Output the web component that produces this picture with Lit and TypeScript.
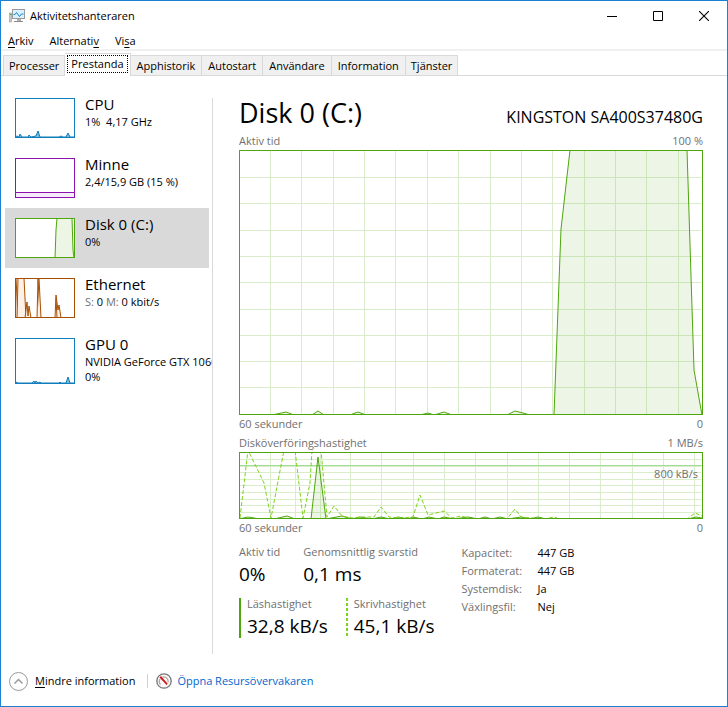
import { LitElement, html, svg, css } from "lit";
import { customElement, property, state } from "lit/decorators.js";
import { classMap } from "lit/directives/class-map.js";

type Resource = {
  id: string;
  name: string;
  lines: unknown[];
  color: string;
  fill: string;
  height: number;
  shapes: string[];
};

const RESOURCES: Resource[] = [
  {
    id: "cpu",
    name: "CPU",
    lines: ["1%  4,17 GHz"],
    color: "#117dbb",
    fill: "#7fb9d9",
    height: 40,
    shapes: ["0,39 2,38 4,39 5,36 7,39 13,39 14,37 16,39 21,38 23,33 25,39 44,39 46,38 48,39 51,39 53,35 55,39 59,39"],
  },
  {
    id: "minne",
    name: "Minne",
    lines: ["2,4/15,9 GB (15 %)"],
    color: "#8b12ae",
    fill: "#f6ecf9",
    height: 40,
    shapes: ["0,34.5 60,34.5"],
  },
  {
    id: "disk",
    name: "Disk 0 (C:)",
    lines: ["0%"],
    color: "#4da60c",
    fill: "#edf5e5",
    height: 40,
    shapes: ["40,40 41,12 42,0 57,0 58,32 59,40"],
  },
  {
    id: "ethernet",
    name: "Ethernet",
    lines: [html`<span class="dim">S:</span> 0 <span class="dim">M:</span> 0 kbit/s`],
    color: "#a74f01",
    fill: "#fdf1e7",
    height: 40,
    shapes: [
      "1,0 3,40",
      "2,40 3,0 9,0 11,40",
      "10,40 12,24 13,38 14,28 16,40",
      "22,40 23,0 25,40",
      "24,0 26,40",
      "40,40 41,17 43,32 44,27 46,40",
      "41,20 42,40",
    ],
  },
  {
    id: "gpu",
    name: "GPU 0",
    lines: ["NVIDIA GeForce GTX 1060 6GB", "0%"],
    color: "#117dbb",
    fill: "#7fb9d9",
    height: 46,
    shapes: ["0,45 1,44 3,45 17,45 19,43 20,45 21,43 23,45 25,44 26,45 44,45 45,44 46,45 51,45 53,39 55,45 59,45"],
  },
];

const TABS = ["Processer", "Prestanda", "Apphistorik", "Autostart", "Användare", "Information", "Tjänster"];

const range = (n: number, from: number, step: number) => Array.from({ length: n }, (_, i) => Math.round(from + i * step));

@customElement("disk-chart")
class DiskChart extends LitElement {
  static styles = css`
    :host { display: block; }
    svg { display: block; width: 100%; overflow: hidden; box-sizing: border-box; border: 1px solid #4da60c; }
    .tall { height: 265px; }
    .short { height: 67px; }
    .grid { stroke: #d9edcb; stroke-width: 1; shape-rendering: crispEdges; }
    .mark { stroke: #a2dc95; stroke-width: 1; shape-rendering: crispEdges; }
    .line { fill: rgba(77, 166, 12, 0.1); stroke: #4da60c; stroke-width: 1; vector-effect: non-scaling-stroke; }
    .write { fill: none; stroke: #7cd31c; stroke-width: 1; stroke-dasharray: 4 2; vector-effect: non-scaling-stroke; }
  `;
  @property() kind = "tall";

  render() {
    const tall = this.kind === "tall";
    const h = tall ? 263 : 65;
    const xs = tall ? range(14, 30, 31.36) : [30, 55, 80, ...range(12, 110, 31.3)];
    const ys = tall ? range(9, 26, 26.3) : range(9, 6, 6.6);
    return html`<svg class=${this.kind} viewBox="0 0 462 ${h}" preserveAspectRatio="none" aria-hidden="true">
      ${xs.map((x) => svg`<line class="grid" x1=${x + 0.5} x2=${x + 0.5} y1="0" y2=${h} />`)}
      ${ys.map((y) => svg`<line class="grid" x1="0" x2="461" y1=${y + 0.5} y2=${y + 0.5} />`)}
      ${tall
        ? svg`
          <polyline class="line" points="-1,264 32,264 46,261 54,264 72,264 78,260 84,264 110,264 118,261 126,264 180,264 188,262 194,264 204,261 212,264 267,264 275,260 283,262 290,264 314,264 321,78 330,-1 447,-1 454,219 462,264" />`
        : svg`
          <line class="mark" x1="0" x2="462" y1="12.5" y2="12.5" />
          <polyline class="line" points="-1,66 8,64 20,66 34,66 47,63 55,66 71,66 78,4 86,66 102,63 112,66 120,64 132,66 141,64 150,66 158,64 168,66 173,64 182,66 189,64 198,66 204,64 214,66 228,64 238,66 245,64 252,66 260,64 268,66 281,64 290,66 298,64 306,66 330,67 444,67 456,64 462,65" />
          <polyline class="write" points="0,65 8,-3 24,30 31,65 44,-3 55,-3 63,65 70,30 72,-3 81,-3 87,64 94,53 102,63 112,65 120,64 134,64 141,54 149,64 160,65 173,64 180,42 188,62 204,58 212,65 221,63 232,66 267,66 275,56 281,64 305,66 314,64 322,67 446,67 455,60 462,63" />`}
    </svg>`;
  }
}

@customElement("app-root")
class AppRoot extends LitElement {
  @state() private tab = "Prestanda";
  @state() private selected = "disk";

  static styles = css`
    :host {
      display: flex;
      flex-direction: column;
      box-sizing: border-box;
      min-height: 100vh;
      border: 1px solid #1a80d2;
      background: #fff;
      color: #000;
      font: 11px/16px "Open Sans", "Noto Sans", sans-serif;
    }
    button { font: inherit; color: inherit; background: none; border: 0; padding: 0; margin: 0; text-align: left; }
    u { text-underline-offset: 2px; }
    .dim { color: #707070; }

    .titlebar { display: flex; align-items: center; height: 30px; padding-left: 8px; gap: 5px; }
    .title { flex: 1; font: inherit; margin: 0; }
    .caption { display: flex; }
    .caption button { width: 46px; height: 28px; display: grid; place-items: center; }
    .caption svg { display: block; }

    .menu { display: flex; gap: 16px; height: 17px; padding: 1px 7px 0; border-bottom: 2px solid #f0f0f0; }

    .tabs { display: flex; align-items: flex-end; height: 24px; padding: 0 2px; border-bottom: 1px solid #d9d9d9; }
    .tab {
      height: 20px; box-sizing: border-box; padding: 1px 6px 0; background: #f0f0f0;
      border: 1px solid #d9d9d9; border-width: 1px 1px 0 0; text-align: center; flex: none;
    }
    .tab:first-child { border-left-width: 1px; }
    .tab:first-child, .tab:last-child { padding: 1px 5px 0; }
    .tab.active { height: 23px; padding: 0 2px 2px; background: #fff; margin-bottom: -1px; }
    .tab.active span { display: block; height: 18px; line-height: 17px; padding: 0 4px; outline: 1px dotted #000; outline-offset: -1px; }

    .body { flex: 1; display: flex; padding: 12px 24px 0 4px; }
    .side { width: 207px; flex: none; border-right: 1px solid #d9d9d9; margin-top: 10px; overflow-x: clip; }
    .item { display: flex; gap: 10px; width: 204px; height: 60px; padding: 10px; box-sizing: border-box; }
    .item:first-child { height: 50px; padding-top: 0; }
    .item.active { background: #d9d9d9; }
    .thumb { flex: none; width: 60px; box-sizing: border-box; display: block; background: #fff; }
    .info { white-space: pre; line-height: 15px; margin-top: -4px; }
    .name { display: block; font-size: 15px; line-height: 20px; }
    .info span.sub { display: block; }

    .main { flex: 1; min-width: 0; padding-left: 26px; }
    .head { display: flex; justify-content: space-between; align-items: baseline; padding: 8px 0 2px; }
    .head h1 { font-weight: 400; font-size: 27px; line-height: 34px; margin: 0; }
    .model { font-size: 16px; line-height: 24px; }
    .cap { display: flex; justify-content: space-between; color: #707070; line-height: 18px; }
    .cap + .cap { margin-top: 1px; }
    .rate { display: grid; }
    .rate > * { grid-area: 1 / 1; }
    .limit { justify-self: end; align-self: start; padding: 14px 5px 0 0; color: #707070; z-index: 1; }

    .stats { display: flex; gap: 27px; padding-top: 7px; }
    .figures { display: grid; gap: 8px; align-content: start; }
    .row { display: flex; gap: 23px; }
    .stat { color: #707070; }
    .stat strong { display: block; color: #000; font-weight: 400; font-size: 19px; line-height: 28px; }
    .rates { gap: 18px; padding-top: 2px; }
    .rates .stat { height: 40px; line-height: 12px; padding-left: 8px; background: linear-gradient(#4da60c, #4da60c) left / 2px 100% no-repeat; }
    .rates .stat.dashed { background: linear-gradient(#7cd31c 3px, transparent 3px) left top / 2px 5px repeat-y; }
    .rates .stat strong { line-height: 32px; }
    table { border-collapse: collapse; align-self: start; line-height: 18px; }
    th { font-weight: 400; color: #707070; text-align: left; padding: 0; width: 76px; }
    td { padding: 0; }

    .footer { display: flex; align-items: center; height: 52px; box-sizing: border-box; padding: 2px 0 0 8px; }
    .less { display: flex; align-items: center; gap: 7px; }
    .sep { width: 1px; height: 14px; background: #d0d0d0; margin: 0 8px 0 12px; }
    .link { display: flex; align-items: center; gap: 5px; color: #0066cc; text-decoration: none; }
    .footer svg { display: block; }
  `;

  private thumb(r: Resource) {
    return html`<svg class="thumb" height=${r.height} viewBox="0 0 60 ${r.height}" aria-hidden="true">
      ${r.shapes.map((p) => svg`
        <polygon points="${p.split(" ")[0].split(",")[0]},${r.height} ${p} ${p.split(" ").at(-1)!.split(",")[0]},${r.height}" fill=${r.fill} />
        <polyline points=${p} fill="none" stroke=${r.color} />`)}
      <rect x="0.5" y="0.5" width="59" height=${r.height - 1} fill="none" stroke=${r.color} />
    </svg>`;
  }

  render() {
    return html`
      <header class="titlebar">
        <svg width="16" height="16" viewBox="0 0 16 16" aria-hidden="true">
          <rect x="0.5" y="5" width="2" height="9" fill="#c8c8c8" stroke="#999" stroke-width=".6" />
          <path d="M1 6.5h1.5" stroke="#4a4" />
          <rect x="3.5" y="1.5" width="12" height="9" fill="#d8f1ff" stroke="#9a9a9a" />
          <path d="M4.500 6.500h1.500l1.500-2 3 4 2-2.500h2" fill="none" stroke="#1683c7" />
          <path d="M8 11h4v2H8z" fill="#b0b0b0" /><path d="M5 13.500h9" stroke="#8a8a8a" />
        </svg>
        <h2 class="title">Aktivitetshanteraren</h2>
        <div class="caption">
          <button aria-label="Minimera"><svg width="10" height="10"><path d="M0 5.500h10" stroke="#000" /></svg></button>
          <button aria-label="Maximera"><svg width="10" height="10"><path d="M.5.5h9v9h-9z" fill="none" stroke="#000" /></svg></button>
          <button aria-label="Stäng"><svg width="10" height="10"><path d="M0 0l10 10M10 0L0 10" stroke="#000" stroke-width="1.100" /></svg></button>
        </div>
      </header>
      <nav class="menu">
        <button><u>A</u>rkiv</button><button>Alternati<u>v</u></button><button>Vi<u>s</u>a</button>
      </nav>
      <div class="tabs" role="tablist">
        ${TABS.map((t) => html`<button role="tab" aria-selected=${t === this.tab}
          class=${classMap({ tab: true, active: t === this.tab })} @click=${() => (this.tab = t)}><span>${t}</span></button>`)}
      </div>
      <div class="body">
        <aside class="side">
          ${RESOURCES.map((r) => html`<button class=${classMap({ item: true, active: r.id === this.selected })}
            @click=${() => (this.selected = r.id)}>${this.thumb(r)}<span class="info"><span class="name">${r.name}</span>${r.lines.map(
              (l) => html`<span class="sub">${l}</span>`)}</span></button>`)}
        </aside>
        <main class="main">
          <div class="head"><h1>Disk 0 (C:)</h1><span class="model">KINGSTON SA400S37480G</span></div>
          <div class="cap"><span>Aktiv tid</span><span>100 %</span></div>
          <disk-chart kind="tall"></disk-chart>
          <div class="cap"><span>60 sekunder</span><span>0</span></div>
          <div class="cap"><span>Disköverföringshastighet</span><span>1 MB/s</span></div>
          <div class="rate"><disk-chart kind="short"></disk-chart><span class="limit">800 kB/s</span></div>
          <div class="cap"><span>60 sekunder</span><span>0</span></div>
          <div class="stats">
            <div class="figures">
              <div class="row">
                <div class="stat">Aktiv tid<strong>0%</strong></div>
                <div class="stat">Genomsnittlig svarstid<strong>0,1 ms</strong></div>
              </div>
              <div class="row rates">
                <div class="stat">Läshastighet<strong>32,8 kB/s</strong></div>
                <div class="stat dashed">Skrivhastighet<strong>45,1 kB/s</strong></div>
              </div>
            </div>
            <table>
              <tr><th scope="row">Kapacitet:</th><td>447 GB</td></tr>
              <tr><th scope="row">Formaterat:</th><td>447 GB</td></tr>
              <tr><th scope="row">Systemdisk:</th><td>Ja</td></tr>
              <tr><th scope="row">Växlingsfil:</th><td>Nej</td></tr>
            </table>
          </div>
        </main>
      </div>
      <footer class="footer">
        <button class="less">
          <svg width="19" height="19" viewBox="0 0 19 19" aria-hidden="true"><circle cx="9.500" cy="9.500" r="9" fill="#fff" stroke="#999" /><path d="M5.500 11.500l4-4 4 4" fill="none" stroke="#999" stroke-width="1.500" /></svg>
          <span><u>M</u>indre information</span>
        </button>
        <span class="sep"></span>
        <a class="link" href="#">
          <svg width="16" height="16" viewBox="0 0 16 16" aria-hidden="true"><circle cx="8" cy="8" r="7.200" fill="#f8f8f8" stroke="#777" stroke-width="1.300" /><path d="M4.500 11.500A4.600 4.600 0 0 1 4 6M6.500 4A4.500 4.500 0 0 1 12 9.500" fill="none" stroke="#b5a09a" stroke-width="1.200" /><path d="M3.500 4.500l1.500-1.500 6.700 7.800-1.200 1.200z" fill="#d01818" /></svg>
          <span>Öppna Resursövervakaren</span>
        </a>
      </footer>`;
  }
}
